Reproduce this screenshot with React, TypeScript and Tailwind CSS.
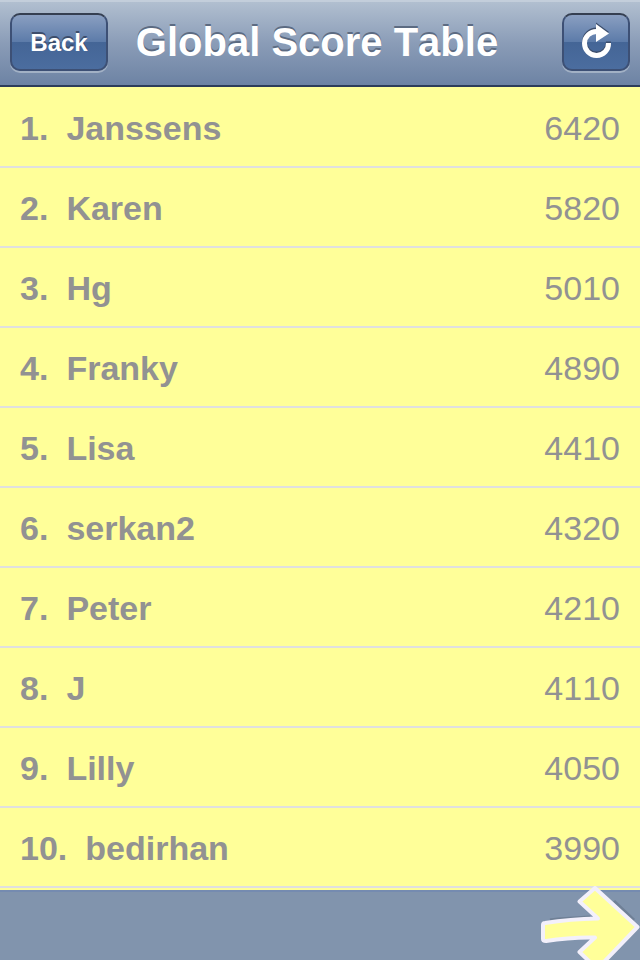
interface Score {
  rank: number;
  name: string;
  points: number;
}

const scores: Score[] = [
  { rank: 1, name: 'Janssens', points: 6420 },
  { rank: 2, name: 'Karen', points: 5820 },
  { rank: 3, name: 'Hg', points: 5010 },
  { rank: 4, name: 'Franky', points: 4890 },
  { rank: 5, name: 'Lisa', points: 4410 },
  { rank: 6, name: 'serkan2', points: 4320 },
  { rank: 7, name: 'Peter', points: 4210 },
  { rank: 8, name: 'J', points: 4110 },
  { rank: 9, name: 'Lilly', points: 4050 },
  { rank: 10, name: 'bedirhan', points: 3990 }
];

// Shared look of the glossy blue bar buttons
const barButton =
  'flex h-[58px] shrink-0 items-center justify-center rounded-[10px] border-2 border-[#3d5075] border-t-[#353f51] bg-[linear-gradient(to_bottom,#8a9fc1_0%,#5c7ba9_50%,#446596_50%,#4b6d9f_100%)] text-white shadow-[0_2px_0_#a2b1c5]';

const RefreshIcon = () => (
  <svg className="h-10 w-10" viewBox="0 0 40 40" fill="none" aria-hidden="true">
    <g transform="translate(0 -1.5)" stroke="#3c4d6b" fill="#3c4d6b">
      <path d="M21 9.5A12 12 0 1 0 32.5 21" strokeWidth="5" fill="none" />
      <path d="M20 2L33 11.5L20 20Z" stroke="none" />
    </g>
    <path d="M21 9.5A12 12 0 1 0 32.5 21" stroke="white" strokeWidth="5" />
    <path d="M20 2L33 11.5L20 20Z" fill="white" />
  </svg>
);

const NextArrow = () => (
  <svg className="h-[74px] w-[100px]" viewBox="0 0 100 74" fill="none" aria-hidden="true">
    <path
      d="M10 34L18 33L50 31M74 15L94 34"
      stroke="#5d6b80"
      strokeOpacity="0.5"
      strokeWidth="3"
      strokeLinejoin="round"
    />
    <path
      d="M3 39Q3 37 5 37Q30 33 58 32.5L39.5 15.5L55 2L97.5 41L62 78H52L39.5 66L55 51.5Q30 51 6 55Q3 55 3 53Z"
      fill="#ffff99"
      stroke="#f3f0fb"
      strokeWidth="4"
      strokeLinejoin="round"
    />
  </svg>
);

export default function App() {
  return (
    <div className="flex min-h-screen flex-col bg-[#8194ad] font-['Liberation_Sans',Arial,sans-serif] [font-kerning:none]">
      <header className="flex h-[87px] items-center border-t-2 border-b-2 border-t-[#c3cedb] border-b-[#2d3d5a] bg-[linear-gradient(to_bottom,#b1bfd0_0%,#8a9cb7_50%,#6d83a4_100%)] px-[10px] pb-[3px]">
        <button type="button" className={`${barButton} w-[98px] pt-[2px] text-2xl font-bold [text-shadow:0_-2px_0_#3c4d6b]`}>
          Back
        </button>
        <h1 className="flex-1 pr-9 text-center text-[40px] leading-none font-bold whitespace-nowrap text-white [text-shadow:0_-2px_0_#5c6b82]">
          Global Score Table
        </h1>
        <button type="button" aria-label="Refresh" className={`${barButton} w-[68px]`}>
          <RefreshIcon />
        </button>
      </header>

      <main className="bg-[#ffff99] pb-[2px]">
        <table className="w-full border-collapse text-[34px] leading-10 text-[#929292]">
          <tbody>
            {scores.map((score) => (
              <tr key={score.rank} className="h-20 border-b-2 border-[#e0e0e0]">
                <th scope="row" className="pt-[2px] pl-5 text-left font-bold">
                  <span className="mr-[18px]">{score.rank}.</span>
                  {score.name}
                </th>
                <td className="pt-[2px] pr-5 text-right">{score.points}</td>
              </tr>
            ))}
          </tbody>
        </table>
      </main>

      <footer className="flex flex-1 justify-end border-t-2 border-[#758bb0]">
        <button type="button" aria-label="Next page" className="-mt-1.5 h-[74px] overflow-hidden">
          <NextArrow />
        </button>
      </footer>
    </div>
  );
}
